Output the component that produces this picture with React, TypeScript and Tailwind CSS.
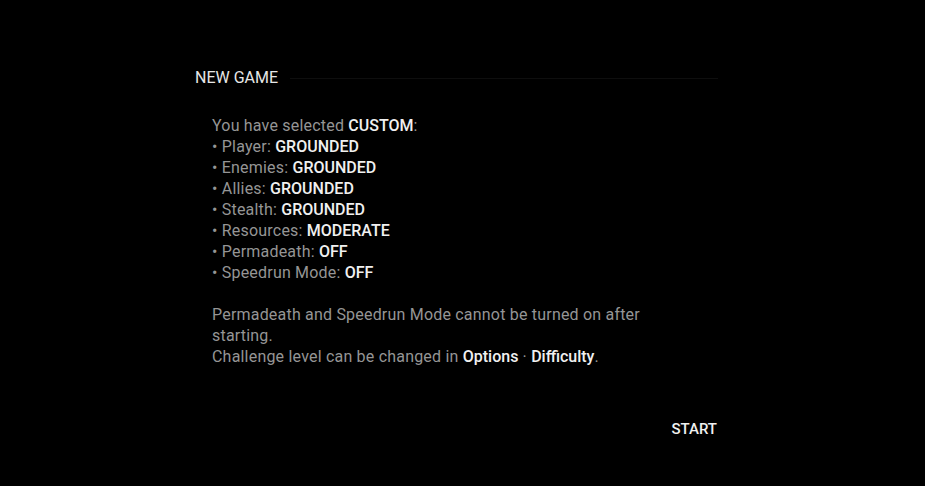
export default function App() {
  const rows: [string, string][] = [
    ["Player", "GROUNDED"],
    ["Enemies", "GROUNDED"],
    ["Allies", "GROUNDED"],
    ["Stealth", "GROUNDED"],
    ["Resources", "MODERATE"],
    ["Permadeath", "OFF"],
    ["Speedrun Mode", "OFF"],
  ];

  return (
    <div className="h-[486px] w-[925px] bg-black font-['Roboto',sans-serif] text-[#959595]">
      <div className="flex flex-col pl-[195px] pr-[207px] pt-[68px]">
        <div className="flex items-center gap-3">
          <h1 className="text-[16px] leading-[20px] text-[#e6e6e6]">NEW GAME</h1>
          <div className="h-px flex-1 bg-[#0e0e0e]" />
        </div>

        <div className="mt-[27px] pl-[17px] text-[16px] leading-[21px] tracking-[0.2px]">
          <p>
            You have selected <b className="font-medium tracking-normal text-[#f0f0f0]">CUSTOM</b>:
          </p>
          <ul>
            {rows.map(([label, value]) => (
              <li key={label}>
                • {label}: <b className="font-medium tracking-normal text-[#f0f0f0]">{value}</b>
              </li>
            ))}
          </ul>

          <p className="mt-[21px] w-[450px]">
            Permadeath and Speedrun Mode cannot be turned on after starting.
          </p>
          <p>
            Challenge level can be changed in{" "}
            <b className="font-medium tracking-normal text-[#f0f0f0]">Options</b> ·{" "}
            <b className="font-medium tracking-normal text-[#f0f0f0]">Difficulty</b>.
          </p>
        </div>

        <div className="mt-[51px] flex justify-end">
          <span className="pr-px text-[15px] font-medium text-[#f0f0f0]">START</span>
        </div>
      </div>
    </div>
  );
}
